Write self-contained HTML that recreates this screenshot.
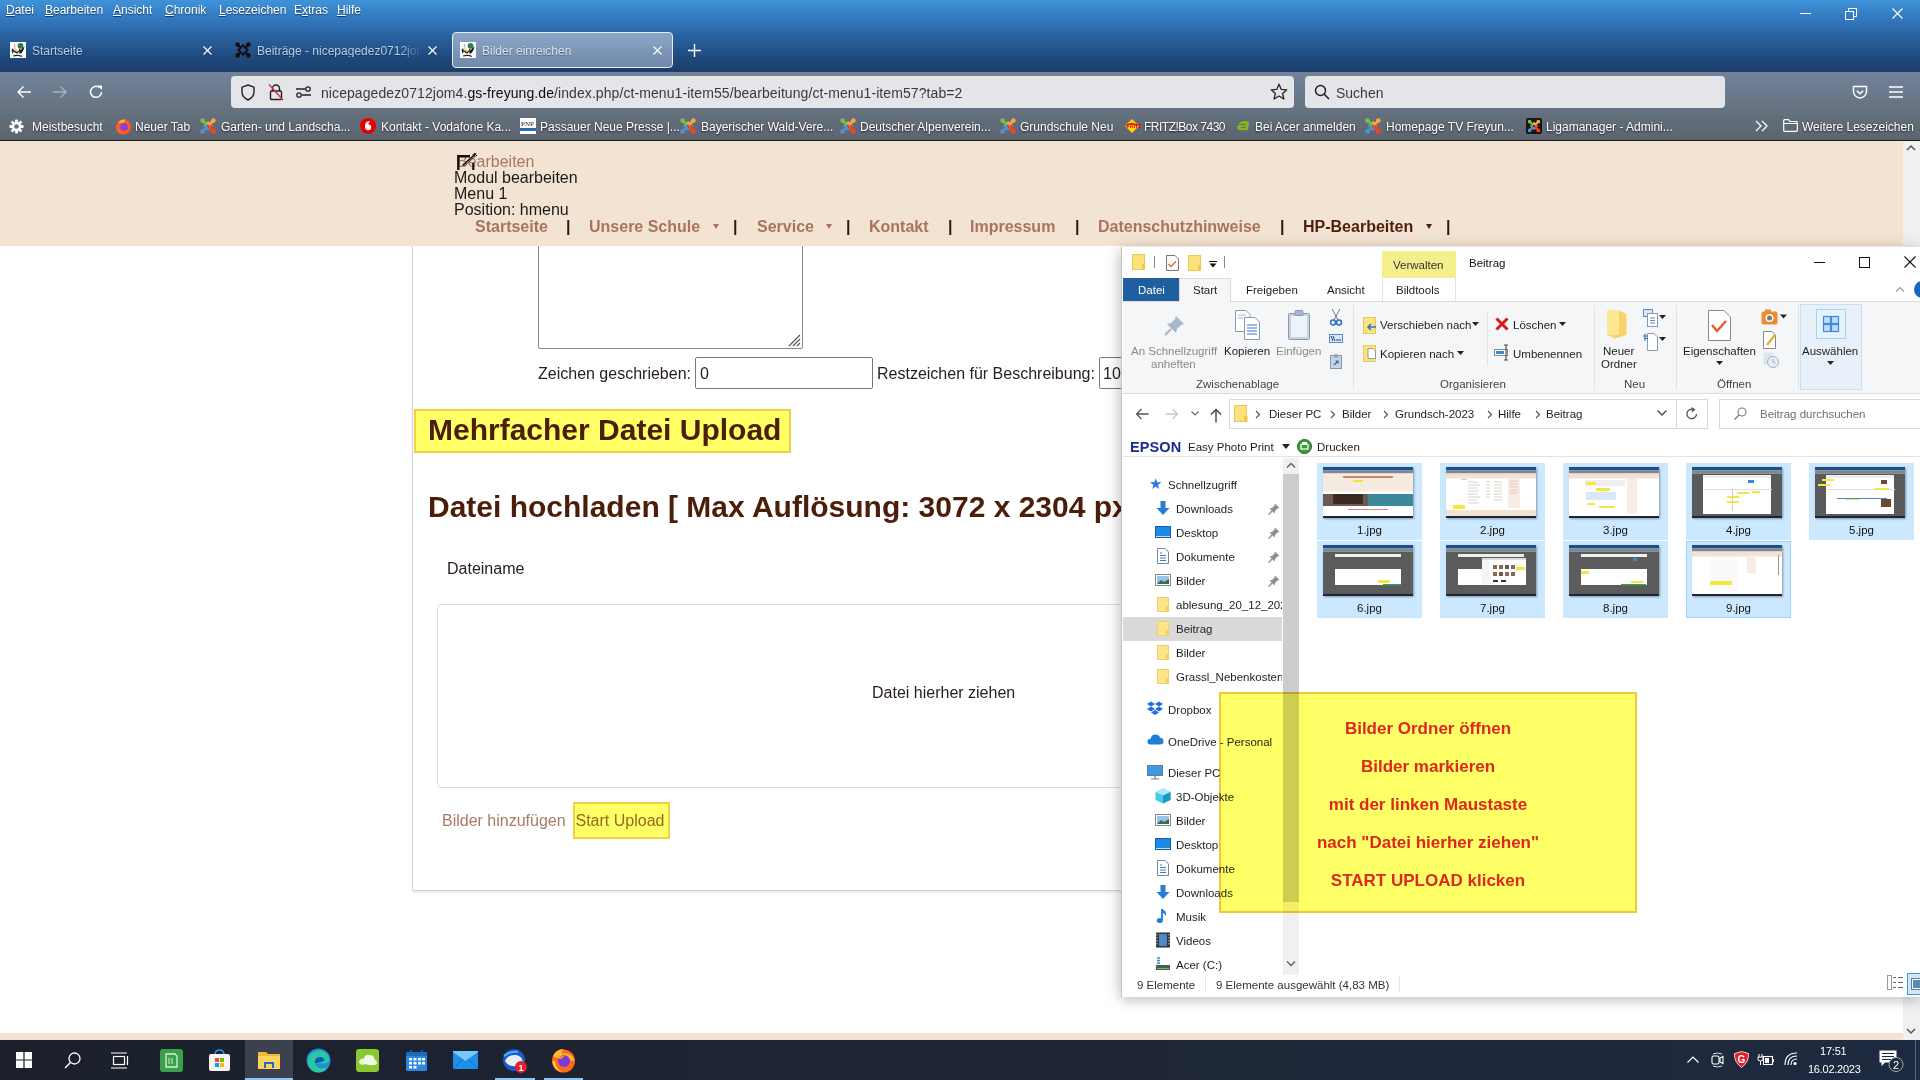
<!DOCTYPE html>
<html><head><meta charset="utf-8">
<style>
*{margin:0;padding:0;box-sizing:border-box}
html,body{width:1920px;height:1080px;overflow:hidden;font-family:"Liberation Sans",sans-serif;background:#fff;position:relative}
.a{position:absolute;white-space:nowrap;line-height:1}
svg.a{overflow:visible}
#chrome{position:absolute;left:0;top:0;width:1920px;height:71px;background:linear-gradient(#3f93d9 0px,#3479c0 18px,#2a62a0 36px,#1f4b80 56px,#1b3f6d 71px)}
#tool{position:absolute;left:0;top:71px;width:1920px;height:69px;background:linear-gradient(#72849c,#65717f 40px,#5c646e)}
.menu{font-size:12px;color:#fff;top:3.5px;text-shadow:0 1px 1px rgba(0,0,0,.5)}
.menu u{text-decoration:underline;text-underline-offset:1px}
.tabt{font-size:12px;color:#b9cbe2;top:45px;text-shadow:0 1px 1px rgba(0,0,0,.35)}
.bm{font-size:12px;color:#fff;top:121px;text-shadow:0 1px 2px rgba(0,0,0,.7)}
.ico{position:absolute}
</style></head><body>
<svg width="0" height="0" style="position:absolute">
<defs>
<symbol id="joomla" viewBox="0 0 16 16">
<g stroke-width="2.6" stroke-linecap="round" fill="none">
<path d="M3 3 L6.2 6.2 M4.6 8 L8 4.6" stroke="#7ac143"/>
<path d="M13 3 L9.8 6.2 M8 4.6 L11.4 8" stroke="#f9a541"/>
<path d="M13 13 L9.8 9.8 M11.4 8 L8 11.4" stroke="#f44321"/>
<path d="M3 13 L6.2 9.8 M8 11.4 L4.6 8" stroke="#5091cd"/>
</g>
<circle cx="2.6" cy="2.6" r="2.3" fill="#7ac143"/><circle cx="13.4" cy="2.6" r="2.3" fill="#f9a541"/>
<circle cx="13.4" cy="13.4" r="2.3" fill="#f44321"/><circle cx="2.6" cy="13.4" r="2.3" fill="#5091cd"/>
</symbol>
<symbol id="joomlab" viewBox="0 0 16 16">
<g stroke-width="2.2" stroke-linecap="round" fill="none" stroke="#111">
<path d="M2.8 2.8 L5.6 5.6 M13.2 2.8 L10.4 5.6 M13.2 13.2 L10.4 10.4 M2.8 13.2 L5.6 10.4"/>
<path d="M8 3.4 L12.6 8 L8 12.6 L3.4 8 Z" stroke-width="2"/>
</g>
<circle cx="2.6" cy="2.6" r="2.3" fill="#111"/><circle cx="13.4" cy="2.6" r="2.3" fill="#111"/>
<circle cx="13.4" cy="13.4" r="2.3" fill="#111"/><circle cx="2.6" cy="13.4" r="2.3" fill="#111"/>
</symbol>
<symbol id="school" viewBox="0 0 16 16">
<rect width="16" height="16" fill="#fff"/>
<circle cx="10.5" cy="3.8" r="2.9" fill="#2f7a55"/>
<path d="M1.5 8 L3 6 L4 9 L2.5 12 Z" fill="#1a2050"/>
<path d="M9 6.5 L11 8 L12.5 6 L14.5 4.5 L13.5 8 L11.5 11 L9.5 12 Z" fill="#181818"/>
<circle cx="5.8" cy="9" r="1.8" fill="#d8c840"/>
<path d="M4 9 L7 11 L9 9 M3 14 Q8 12.5 12 14.5" fill="none" stroke="#222" stroke-width="1.1"/>
<path d="M4.5 2 L5 7" stroke="#999" stroke-width="0.8"/>
</symbol>
</defs>
</svg>

<div id="chrome"></div>
<div id="tool"></div>
<div class="a" style="left:0;top:70px;width:1920px;height:2px;background:linear-gradient(#17355e,#24426a)"></div>
<div class="a" style="left:0;top:140px;width:1920px;height:1px;background:#1c1c1c"></div>
<!-- menu -->
<div class="a menu" style="left:6px"><u>D</u>atei</div>
<div class="a menu" style="left:45px"><u>B</u>earbeiten</div>
<div class="a menu" style="left:113px"><u>A</u>nsicht</div>
<div class="a menu" style="left:165px"><u>C</u>hronik</div>
<div class="a menu" style="left:219px"><u>L</u>esezeichen</div>
<div class="a menu" style="left:294px">E<u>x</u>tras</div>
<div class="a menu" style="left:337px"><u>H</u>ilfe</div>
<!-- window controls -->
<div class="a" style="left:1800px;top:13px;width:11px;height:1px;background:#fff"></div>
<svg class="a" style="left:1845px;top:8px" width="12" height="12" viewBox="0 0 12 12"><rect x="0.5" y="3.5" width="8" height="8" fill="none" stroke="#fff"/><path d="M3.5 3.5 V0.5 H11.5 V8.5 H8.5" fill="none" stroke="#fff"/></svg>
<svg class="a" style="left:1892px;top:8px" width="11" height="11" viewBox="0 0 11 11"><path d="M0.5 0.5 L10.5 10.5 M10.5 0.5 L0.5 10.5" stroke="#fff" stroke-width="1.1"/></svg>
<!-- tabs -->
<div class="a" style="left:452px;top:32px;width:221px;height:36px;border:1px solid #e4ecf6;border-radius:4px;background:linear-gradient(#8aa6c8,#7189ab)"></div>
<svg class="a" style="left:10px;top:42px" width="16" height="16"><use href="#school"/></svg>
<div class="a tabt" style="left:32px">Startseite</div>
<svg class="a" style="left:203px;top:46px" width="9" height="9" viewBox="0 0 9 9"><path d="M0.5 0.5 L8.5 8.5 M8.5 0.5 L0.5 8.5" stroke="#fff" stroke-width="1.1"/></svg>
<svg class="a" style="left:235px;top:42px" width="16" height="16"><use href="#joomlab"/></svg>
<div class="a tabt" style="left:257px;width:166px;overflow:hidden;-webkit-mask-image:linear-gradient(90deg,#000 85%,transparent)">Beiträge - nicepagedez0712jom4</div>
<svg class="a" style="left:428px;top:46px" width="9" height="9" viewBox="0 0 9 9"><path d="M0.5 0.5 L8.5 8.5 M8.5 0.5 L0.5 8.5" stroke="#fff" stroke-width="1.1"/></svg>
<svg class="a" style="left:460px;top:42px" width="16" height="16"><use href="#school"/></svg>
<div class="a tabt" style="left:482px;color:#d6e0ec">Bilder einreichen</div>
<svg class="a" style="left:653px;top:46px" width="9" height="9" viewBox="0 0 9 9"><path d="M0.5 0.5 L8.5 8.5 M8.5 0.5 L0.5 8.5" stroke="#fff" stroke-width="1.1"/></svg>
<svg class="a" style="left:688px;top:44px" width="13" height="13" viewBox="0 0 13 13"><path d="M6.5 0 V13 M0 6.5 H13" stroke="#fff" stroke-width="1.4"/></svg>
<!-- nav buttons -->
<svg class="a" style="left:16px;top:85px" width="16" height="14" viewBox="0 0 16 14"><path d="M15 7 H2 M7.5 1.5 L2 7 L7.5 12.5" fill="none" stroke="#fff" stroke-width="1.4"/></svg>
<svg class="a" style="left:52px;top:85px" width="16" height="14" viewBox="0 0 16 14"><path d="M1 7 H14 M8.5 1.5 L14 7 L8.5 12.5" fill="none" stroke="#a9b3bf" stroke-width="1.4"/></svg>
<svg class="a" style="left:88px;top:84px" width="16" height="16" viewBox="0 0 16 16"><path d="M13.5 8 A5.5 5.5 0 1 1 11.5 3.6" fill="none" stroke="#fff" stroke-width="1.5"/><path d="M9.5 1.5 L14 1.5 L14 6 Z" fill="#fff"/></svg>
<!-- url bar -->
<div class="a" style="left:231px;top:76px;width:1063px;height:32px;background:#e3e5e9;border-radius:4px"></div>
<svg class="a" style="left:240px;top:84px" width="16" height="17" viewBox="0 0 16 17"><path d="M8 1 L14 3.2 V8 Q14 13 8 16 Q2 13 2 8 V3.2 Z" fill="none" stroke="#222" stroke-width="1.4"/></svg>
<svg class="a" style="left:268px;top:83px" width="16" height="18" viewBox="0 0 16 18"><path d="M4.5 8 V5.5 A3.5 3.5 0 0 1 11.5 5.5 V8" fill="none" stroke="#222" stroke-width="1.4"/><rect x="2.5" y="8" width="11" height="8.5" rx="1" fill="none" stroke="#222" stroke-width="1.4"/><path d="M1 1.5 L15 17" stroke="#e22850" stroke-width="1.4"/></svg>
<svg class="a" style="left:295px;top:85px" width="17" height="14" viewBox="0 0 17 14"><path d="M1 4 H10 M7 10 H16" stroke="#222" stroke-width="1.4"/><circle cx="13" cy="4" r="2.2" fill="none" stroke="#222" stroke-width="1.3"/><circle cx="4" cy="10" r="2.2" fill="none" stroke="#222" stroke-width="1.3"/></svg>
<div class="a" style="left:321px;top:86px;font-size:14px;color:#3a3a3a;letter-spacing:0.08px">nicepagedez0712jom4.<span style="color:#0c0c0c">gs-freyung.de</span>/index.php/ct-menu1-item55/bearbeitung/ct-menu1-item57?tab=2</div>
<svg class="a" style="left:1270px;top:83px" width="18" height="18" viewBox="0 0 18 18"><path d="M9 1.2 L11.3 6.4 L16.8 6.8 L12.6 10.4 L13.9 16 L9 13 L4.1 16 L5.4 10.4 L1.2 6.8 L6.7 6.4 Z" fill="none" stroke="#222" stroke-width="1.3" stroke-linejoin="round"/></svg>
<div class="a" style="left:1305px;top:76px;width:420px;height:32px;background:#e3e5e9;border-radius:4px"></div>
<svg class="a" style="left:1314px;top:84px" width="16" height="16" viewBox="0 0 16 16"><circle cx="6.5" cy="6.5" r="5" fill="none" stroke="#222" stroke-width="1.5"/><path d="M10 10 L15 15" stroke="#222" stroke-width="1.6"/></svg>
<div class="a" style="left:1336px;top:86px;font-size:14px;color:#3c3c3c">Suchen</div>
<svg class="a" style="left:1852px;top:85px" width="16" height="15" viewBox="0 0 16 15"><path d="M1.5 1.5 H14.5 V6.5 A6.5 6.5 0 0 1 1.5 6.5 Z" fill="none" stroke="#fff" stroke-width="1.4" stroke-linejoin="round"/><path d="M4.8 5.8 L8 8.8 L11.2 5.8" fill="none" stroke="#fff" stroke-width="1.5"/></svg>
<svg class="a" style="left:1889px;top:86px" width="14" height="12" viewBox="0 0 14 12"><path d="M0 1 H14 M0 6 H14 M0 11 H14" stroke="#fff" stroke-width="1.3"/></svg>
<!-- bookmarks -->
<svg class="a" style="left:9px;top:119px" width="15" height="15" viewBox="0 0 16 16"><g fill="#fff"><circle cx="8" cy="8" r="5"/><rect x="6.5" y="0.5" width="3" height="15" rx="0.5"/><rect x="0.5" y="6.5" width="15" height="3" rx="0.5"/><rect x="6.5" y="0.5" width="3" height="15" rx="0.5" transform="rotate(45 8 8)"/><rect x="6.5" y="0.5" width="3" height="15" rx="0.5" transform="rotate(-45 8 8)"/></g><circle cx="8" cy="8" r="2.5" fill="#66717e"/></svg>
<div class="a bm" style="left:32px">Meistbesucht</div>
<svg class="a" style="left:115px;top:118px" width="17" height="17" viewBox="0 0 16 16"><circle cx="8" cy="8.5" r="7" fill="#ff5a2a"/><path d="M3 5 Q5 0.5 10 1.5 Q8 2.5 9 4" fill="#ffb22a"/><circle cx="8.5" cy="8.5" r="3.6" fill="#8b3fd6"/><path d="M1.2 9 Q2 13.5 7 15 Q3 14 1.2 9" fill="#ffcd3a"/></svg>
<div class="a bm" style="left:135px">Neuer Tab</div>
<svg class="a" style="left:200px;top:118px" width="16" height="16"><use href="#joomla"/></svg>
<div class="a bm" style="left:221px">Garten- und Landscha...</div>
<svg class="a" style="left:360px;top:118px" width="16" height="16" viewBox="0 0 16 16"><circle cx="8" cy="8" r="8" fill="#e60000"/><path d="M8.6 3.2 Q5 3.6 5 8.4 Q5 12.2 8.3 12.2 Q11.2 12.2 11.2 9.2 Q11.2 6.7 8.4 6.4 Q8 4.6 10.2 3.5 Q9.4 3.1 8.6 3.2" fill="#fff"/></svg>
<div class="a bm" style="left:381px">Kontakt - Vodafone Ka...</div>
<svg class="a" style="left:520px;top:118px" width="16" height="16" viewBox="0 0 16 16"><rect width="16" height="16" fill="#fff"/><text x="1" y="8" font-size="7" font-family="Liberation Serif" fill="#222">PNP</text><rect x="0" y="10" width="16" height="3" fill="#2a6ab0"/></svg>
<div class="a bm" style="left:540px">Passauer Neue Presse |...</div>
<svg class="a" style="left:680px;top:118px" width="16" height="16"><use href="#joomla"/></svg>
<div class="a bm" style="left:701px">Bayerischer Wald-Vere...</div>
<svg class="a" style="left:840px;top:118px" width="16" height="16"><use href="#joomla"/></svg>
<div class="a bm" style="left:860px">Deutscher Alpenverein...</div>
<svg class="a" style="left:1000px;top:118px" width="16" height="16"><use href="#joomla"/></svg>
<div class="a bm" style="left:1020px">Grundschule Neu</div>
<svg class="a" style="left:1124px;top:118px" width="16" height="16" viewBox="0 0 16 16"><path d="M8 1 L15 8 L8 15 L1 8 Z" fill="#ffd200"/><path d="M2.5 8 Q8 3 13.5 8" fill="none" stroke="#e2001a" stroke-width="1.5"/><text x="3" y="10" font-size="5" font-weight="bold" fill="#e2001a" font-family="Liberation Sans">FRITZ</text></svg>
<div class="a bm" style="left:1144px;letter-spacing:-0.5px">FRITZ!Box 7430</div>
<svg class="a" style="left:1235px;top:118px" width="16" height="16" viewBox="0 0 16 16"><path d="M3 6 Q8 1 14 4 L13 12 L9 12 Q2 13 2 9 Q2 7 6 7 L11 7 Q10 5 5 6.5 Z M6 9 Q5 10.5 10 10 L10.5 8.5 Z" fill="#83b81a" fill-rule="evenodd"/></svg>
<div class="a bm" style="left:1255px">Bei Acer anmelden</div>
<svg class="a" style="left:1365px;top:118px" width="16" height="16"><use href="#joomla"/></svg>
<div class="a bm" style="left:1386px">Homepage TV Freyun...</div>
<svg class="a" style="left:1526px;top:118px" width="16" height="16" viewBox="0 0 16 16"><rect width="16" height="16" rx="2" fill="#161616"/><use href="#joomla" x="1.5" y="1.5" width="13" height="13"/></svg>
<div class="a bm" style="left:1546px">Ligamanager - Admini...</div>
<svg class="a" style="left:1755px;top:120px" width="14" height="12" viewBox="0 0 14 12"><path d="M1 1 L6 6 L1 11 M7 1 L12 6 L7 11" fill="none" stroke="#fff" stroke-width="1.3"/></svg>
<svg class="a" style="left:1783px;top:119px" width="15" height="13" viewBox="0 0 15 13"><path d="M0.7 1.5 Q0.7 0.7 1.5 0.7 H5.5 L7 2.5 H13.5 Q14.3 2.5 14.3 3.3 V11.5 Q14.3 12.3 13.5 12.3 H1.5 Q0.7 12.3 0.7 11.5 Z M0.7 4.5 H14.3" fill="none" stroke="#fff" stroke-width="1.2"/></svg>
<div class="a bm" style="left:1802px">Weitere Lesezeichen</div>
<!-- ============ PAGE ============ -->
<div class="a" style="left:0;top:141px;width:1903px;height:105px;background:#f3e3d3"></div>
<div class="a" style="left:1903px;top:141px;width:17px;height:899px;background:#f0f0f0"></div>
<svg class="a" style="left:1906px;top:144px" width="10" height="7" viewBox="0 0 10 7"><path d="M1 6 L5 2 L9 6" fill="none" stroke="#555" stroke-width="1.5"/></svg>
<svg class="a" style="left:1906px;top:1028px" width="10" height="7" viewBox="0 0 10 7"><path d="M1 1 L5 5 L9 1" fill="none" stroke="#555" stroke-width="1.5"/></svg>
<div class="a" style="left:0;top:1033px;width:1903px;height:7px;background:#f3e3d3"></div>
<style>
.pt{font-size:16px;color:#1a1a1a}
.nv{font-size:16px;font-weight:bold;color:#a8745a}
.sp{font-size:16px;font-weight:bold;color:#3a1608}
.tri{font-size:9px;color:#a9704f}
</style>
<div class="a pt" style="left:457px;top:154px;color:#a87a62">Bearbeiten</div>
<svg class="a" style="left:456px;top:152px" width="22" height="19" viewBox="0 0 22 19"><path d="M2.3 18 V4.3 H14" fill="none" stroke="#111" stroke-width="2.4"/><path d="M17.3 18 V11" fill="none" stroke="#111" stroke-width="2.2"/><path d="M6.5 13.5 L20 1.5" stroke="#111" stroke-width="1.6"/><path d="M8 14.5 L19 4.5" stroke="#333" stroke-width="0.8"/><path d="M16.5 2 L19.5 5 M18 1 L21 4" stroke="#111" stroke-width="1"/></svg>
<div class="a pt" style="left:454px;top:170px">Modul bearbeiten</div>
<div class="a pt" style="left:454px;top:186px">Menu 1</div>
<div class="a pt" style="left:454px;top:202px">Position: hmenu</div>
<div class="a nv" style="left:475px;top:219px">Startseite</div>
<div class="a sp" style="left:566px;top:219px">|</div>
<div class="a nv" style="left:589px;top:219px">Unsere Schule</div>
<svg class="a" style="left:712px;top:223px" width="8" height="7" viewBox="0 0 8 7"><path d="M1 1 H7 L4 6 Z" fill="#a8745a"/></svg>
<div class="a sp" style="left:733px;top:219px">|</div>
<div class="a nv" style="left:757px;top:219px">Service</div>
<svg class="a" style="left:825px;top:223px" width="8" height="7" viewBox="0 0 8 7"><path d="M1 1 H7 L4 6 Z" fill="#a8745a"/></svg>
<div class="a sp" style="left:846px;top:219px">|</div>
<div class="a nv" style="left:869px;top:219px">Kontakt</div>
<div class="a sp" style="left:948px;top:219px">|</div>
<div class="a nv" style="left:970px;top:219px">Impressum</div>
<div class="a sp" style="left:1075px;top:219px">|</div>
<div class="a nv" style="left:1098px;top:219px">Datenschutzhinweise</div>
<div class="a sp" style="left:1280px;top:219px">|</div>
<div class="a nv" style="left:1303px;top:219px;color:#4d1e0c">HP-Bearbeiten</div>
<svg class="a" style="left:1425px;top:223px" width="8" height="7" viewBox="0 0 8 7"><path d="M1 1 H7 L4 6 Z" fill="#4d1e0c"/></svg>
<div class="a sp" style="left:1446px;top:219px">|</div>

<!-- content card -->
<div class="a" style="left:412px;top:245px;width:760px;height:646px;border-left:1px solid #d6d6d6;border-bottom:1px solid #d0d0d0;box-shadow:0 2px 2px rgba(0,0,0,.08)"></div>
<div class="a" style="left:538px;top:236px;width:265px;height:113px;border:1px solid #8a8a8a;border-radius:2px;background:#fff"></div>
<div class="a" style="left:412px;top:236px;width:710px;height:10px;background:#f3e3d3"></div>
<svg class="a" style="left:785px;top:331px" width="16" height="16" viewBox="0 0 16 16"><path d="M15 4 L4 15 M15 8 L8 15 M15 12 L12 15" stroke="#555" stroke-width="1.2"/></svg>
<div class="a pt" style="left:538px;top:366px;color:#2a2020">Zeichen geschrieben:</div>
<div class="a" style="left:695px;top:357px;width:178px;height:32px;border:1px solid #777;border-radius:2px"></div>
<div class="a pt" style="left:700px;top:366px;color:#2a2020">0</div>
<div class="a pt" style="left:877px;top:366px;color:#2a2020">Restzeichen für Beschreibung:</div>
<div class="a" style="left:1099px;top:357px;width:60px;height:32px;border:1px solid #777;border-radius:2px"></div>
<div class="a pt" style="left:1103px;top:366px;color:#2a2020">10</div>
<div class="a" style="left:414px;top:409px;width:377px;height:44px;background:#ffff66;border:2px solid #f0d146"></div>
<div class="a" style="left:428px;top:415px;font-size:30px;font-weight:bold;color:#4b1d0a">Mehrfacher Datei Upload</div>
<div class="a" style="left:428px;top:492px;font-size:30px;font-weight:bold;color:#4b1d0a">Datei hochladen [ Max Auflösung: 3072 x 2304 px</div>
<div class="a pt" style="left:447px;top:561px;color:#2a2020">Dateiname</div>
<div class="a" style="left:437px;top:604px;width:740px;height:184px;border:1px solid #dedede;border-radius:4px"></div>
<div class="a pt" style="left:872px;top:685px;color:#2a2020">Datei hierher ziehen</div>
<div class="a pt" style="left:442px;top:813px;color:#a97a66">Bilder hinzufügen</div>
<div class="a" style="left:573px;top:802px;width:97px;height:37px;background:#ffff66;border:2px solid #f0d146"></div>
<div class="a pt" style="left:575.5px;top:813px;color:#94691f">Start Upload</div>
<!-- ============ EXPLORER ============ -->
<style>
.ex{font-size:11.5px;color:#1e1e1e}
.exg{font-size:11.5px;color:#8a8a8a}
</style>
<div class="a" style="left:1121px;top:247px;width:799px;height:750px;background:#fff;box-shadow:-2px 1px 16px rgba(0,0,0,.16),0 4px 10px rgba(0,0,0,.12);border-left:1px solid #c4c4c4"></div>
<!-- QAT -->
<svg class="a" style="left:1132px;top:254px" width="14" height="16" viewBox="0 0 14 16"><rect x="0.5" y="0.5" width="12" height="15" fill="#fde27a" stroke="#e8c860"/><rect x="10" y="10" width="3" height="5.5" fill="#f0c850"/></svg>
<div class="a" style="left:1154px;top:256px;width:1px;height:12px;background:#888"></div>
<svg class="a" style="left:1166px;top:255px" width="13" height="16" viewBox="0 0 13 16"><path d="M0.5 0.5 H9 L12.5 4 V15.5 H0.5 Z" fill="#fafafa" stroke="#777"/><path d="M2.5 9 L5 11.5 L10 6.5" fill="none" stroke="#e06a3a" stroke-width="1.4"/></svg>
<svg class="a" style="left:1188px;top:255px" width="14" height="16" viewBox="0 0 14 16"><rect x="0.5" y="0.5" width="12" height="15" fill="#fde27a" stroke="#e8c860"/><rect x="10" y="10" width="3" height="5.5" fill="#f0c850"/></svg>
<svg class="a" style="left:1209px;top:261px" width="8" height="7" viewBox="0 0 8 7"><path d="M0 0.5 H8" stroke="#111"/><path d="M0.5 2.5 H7.5 L4 6.5 Z" fill="#111"/></svg>
<div class="a" style="left:1224px;top:256px;width:1px;height:12px;background:#888"></div>
<div class="a" style="left:1382px;top:251px;width:74px;height:27px;background:#f2ef8c"></div>
<div class="a ex" style="left:1393px;top:260px;color:#333">Verwalten</div>
<div class="a ex" style="left:1469px;top:258px;color:#111">Beitrag</div>
<div class="a" style="left:1814px;top:262px;width:11px;height:1px;background:#111"></div>
<div class="a" style="left:1859px;top:257px;width:11px;height:11px;border:1px solid #111"></div>
<svg class="a" style="left:1904px;top:256px" width="12" height="12" viewBox="0 0 12 12"><path d="M0.5 0.5 L11.5 11.5 M11.5 0.5 L0.5 11.5" stroke="#111" stroke-width="1.1"/></svg>
<!-- ribbon tabs -->
<div class="a" style="left:1123px;top:301px;width:797px;height:93px;background:#f5f6f7;border-top:1px solid #dadbdc;border-bottom:1px solid #dadbdc"></div>
<div class="a" style="left:1123px;top:278px;width:56px;height:23px;background:#1f5f9f"></div>
<div class="a ex" style="left:1138px;top:285px;color:#fff">Datei</div>
<div class="a" style="left:1179px;top:278px;width:52px;height:24px;background:#f5f6f7;border:1px solid #dadbdc;border-bottom:none"></div>
<div class="a ex" style="left:1193px;top:285px">Start</div>
<div class="a ex" style="left:1246px;top:285px">Freigeben</div>
<div class="a ex" style="left:1327px;top:285px">Ansicht</div>
<div class="a" style="left:1382px;top:278px;width:1px;height:23px;background:#e2e2e2"></div>
<div class="a" style="left:1455px;top:278px;width:1px;height:23px;background:#e2e2e2"></div>
<div class="a ex" style="left:1396px;top:285px">Bildtools</div>
<svg class="a" style="left:1895px;top:286px" width="10" height="6" viewBox="0 0 10 6"><path d="M1 5.5 L5 1.5 L9 5.5" fill="none" stroke="#999" stroke-width="1.2"/></svg>
<div class="a" style="left:1914px;top:281px;width:17px;height:17px;border-radius:50%;background:#1766c2"></div>
<!-- ribbon content -->
<svg class="a" style="left:1164px;top:314px" width="22" height="22" viewBox="0 0 22 22"><path d="M12 2 L20 10 L17 11 L13 15 L12 19 L3 10 L7 9 L11 5 Z" fill="#a7b8cc"/><path d="M7 15 L1 21" stroke="#a7b8cc" stroke-width="2.2"/></svg>
<div class="a exg" style="left:1131px;top:346px">An Schnellzugriff</div>
<div class="a exg" style="left:1151px;top:359px">anheften</div>
<svg class="a" style="left:1235px;top:310px" width="25" height="30" viewBox="0 0 25 30"><path d="M0.5 0.5 H11 L15 4.5 V21.5 H0.5 Z" fill="#fff" stroke="#8b9ab0"/><path d="M9.5 7.5 H20 L24.5 12 V29.5 H9.5 Z" fill="#fff" stroke="#8b9ab0"/><path d="M12 15 H22 M12 18 H22 M12 21 H22 M12 24 H22" stroke="#3a78c8" stroke-width="1"/><path d="M3 5 H11 M3 8 H8" stroke="#9fb8d8" stroke-width="1"/></svg>
<div class="a ex" style="left:1224px;top:346px">Kopieren</div>
<svg class="a" style="left:1288px;top:310px" width="22" height="30" viewBox="0 0 22 30"><rect x="0.5" y="3.5" width="21" height="26" rx="1" fill="#c5d3e3" stroke="#8b9ab0"/><rect x="3" y="6" width="16" height="21" fill="#eef3f9"/><rect x="7" y="0.5" width="8" height="5" rx="1" fill="#a8b8cc" stroke="#8b9ab0"/></svg>
<div class="a exg" style="left:1276px;top:346px">Einfügen</div>
<svg class="a" style="left:1330px;top:309px" width="12" height="17" viewBox="0 0 12 17"><path d="M2 0 L8 11 M10 0 L4 11" stroke="#777" stroke-width="1"/><circle cx="3" cy="13.5" r="2.5" fill="none" stroke="#2a70c0" stroke-width="1.5"/><circle cx="9" cy="13.5" r="2.5" fill="none" stroke="#2a70c0" stroke-width="1.5"/></svg>
<svg class="a" style="left:1329px;top:334px" width="14" height="9" viewBox="0 0 14 9"><rect x="0.5" y="0.5" width="13" height="8" fill="#dbe8f6" stroke="#5a8ac8"/><path d="M2 2 L4 7 M4 2 L6 7 M7 6 H12" stroke="#1a4a8a" stroke-width="1"/></svg>
<svg class="a" style="left:1330px;top:354px" width="12" height="15" viewBox="0 0 12 15"><rect x="0.5" y="1.5" width="11" height="13" fill="#c5d3e3" stroke="#8b9ab0"/><rect x="4" y="0.5" width="4" height="3" fill="#8b9ab0"/><path d="M4 11 L8 7 M5.5 7 H8 V9.5" fill="none" stroke="#2a6ab0" stroke-width="1.1"/></svg>
<div class="a ex" style="left:1196px;top:379px;color:#444">Zwischenablage</div>
<div class="a" style="left:1353px;top:305px;width:1px;height:85px;background:#e2e3e4"></div>
<svg class="a" style="left:1363px;top:317px" width="14" height="17" viewBox="0 0 14 17"><rect x="0.5" y="0.5" width="12" height="16" fill="#fde27a" stroke="#e8c860"/><path d="M13 10 H5 M8 7 L5 10 L8 13" fill="none" stroke="#2a78d0" stroke-width="1.6"/></svg>
<div class="a ex" style="left:1380px;top:320px">Verschieben nach</div>
<svg class="a" style="left:1472px;top:322px" width="7" height="4" viewBox="0 0 7 4"><path d="M0 0 H7 L3.5 4 Z" fill="#222"/></svg>
<svg class="a" style="left:1363px;top:345px" width="14" height="17" viewBox="0 0 14 17"><rect x="0.5" y="0.5" width="12" height="16" fill="#fde27a" stroke="#e8c860"/><path d="M5 3.5 H10 L12.5 6 V13.5 H5 Z" fill="#fff" stroke="#8b9ab0"/></svg>
<div class="a ex" style="left:1380px;top:349px">Kopieren nach</div>
<svg class="a" style="left:1457px;top:351px" width="7" height="4" viewBox="0 0 7 4"><path d="M0 0 H7 L3.5 4 Z" fill="#222"/></svg>
<div class="a" style="left:1487px;top:312px;width:1px;height:54px;background:#e2e3e4"></div>
<svg class="a" style="left:1495px;top:317px" width="14" height="14" viewBox="0 0 14 14"><path d="M1.5 1.5 L12.5 12.5 M12.5 1.5 L1.5 12.5" stroke="#d81a1a" stroke-width="3"/></svg>
<div class="a ex" style="left:1513px;top:320px">Löschen</div>
<svg class="a" style="left:1559px;top:322px" width="7" height="4" viewBox="0 0 7 4"><path d="M0 0 H7 L3.5 4 Z" fill="#222"/></svg>
<svg class="a" style="left:1494px;top:344px" width="17" height="17" viewBox="0 0 17 17"><rect x="0.5" y="5.5" width="13" height="6" fill="#fff" stroke="#888"/><rect x="2" y="7" width="8" height="3" fill="#3a88d8"/><path d="M10 1 H14 M12 1 V16 M10 16 H14" stroke="#444" stroke-width="1.1"/></svg>
<div class="a ex" style="left:1513px;top:349px">Umbenennen</div>
<div class="a ex" style="left:1440px;top:379px;color:#444">Organisieren</div>
<div class="a" style="left:1594px;top:305px;width:1px;height:85px;background:#e2e3e4"></div>
<svg class="a" style="left:1607px;top:310px" width="20" height="29" viewBox="0 0 20 29"><path d="M0.5 0.5 H12 L19.5 4 V25 L8 28.5 L0.5 25 Z" fill="#f7d46a"/><path d="M0.5 0.5 H12 V25 L0.5 25 Z" fill="#fde793"/></svg>
<div class="a ex" style="left:1603px;top:346px">Neuer</div>
<div class="a ex" style="left:1601px;top:359px">Ordner</div>
<svg class="a" style="left:1643px;top:309px" width="23" height="20" viewBox="0 0 23 20"><rect x="0.5" y="0.5" width="9" height="7" fill="#dbe8f6" stroke="#5a8ac8"/><rect x="4.5" y="4.5" width="10" height="13" fill="#fff" stroke="#8b9ab0"/><path d="M7 9 H12 M7 11.5 H12 M7 14 H12" stroke="#5a8ac8"/><path d="M16 6 H23 L19.5 10 Z" fill="#222"/></svg>
<svg class="a" style="left:1643px;top:331px" width="23" height="20" viewBox="0 0 23 20"><path d="M4.5 2.5 H11 L14.5 6 V19.5 H4.5 Z" fill="#fff" stroke="#8b9ab0"/><path d="M0 5 H5 M1 7.5 H5 M2 2.5 V10" stroke="#2a70c0"/><path d="M16 6 H23 L19.5 10 Z" fill="#222"/></svg>
<div class="a ex" style="left:1624px;top:379px;color:#444">Neu</div>
<div class="a" style="left:1676px;top:305px;width:1px;height:85px;background:#e2e3e4"></div>
<svg class="a" style="left:1708px;top:310px" width="23" height="31" viewBox="0 0 23 31"><path d="M0.5 0.5 H16 L22.5 7 V30.5 H0.5 Z" fill="#fff" stroke="#888"/><path d="M4 15 L9 21 L18 11" fill="none" stroke="#e8582a" stroke-width="2.4"/></svg>
<div class="a ex" style="left:1683px;top:346px">Eigenschaften</div>
<svg class="a" style="left:1716px;top:361px" width="7" height="4" viewBox="0 0 7 4"><path d="M0 0 H7 L3.5 4 Z" fill="#222"/></svg>
<svg class="a" style="left:1761px;top:309px" width="26" height="16" viewBox="0 0 26 16"><rect x="0.5" y="2.5" width="16" height="13" rx="2" fill="#f08a2a"/><rect x="4" y="0.5" width="6" height="3" fill="#f08a2a"/><circle cx="8.5" cy="9" r="4" fill="#fff"/><circle cx="8.5" cy="9" r="2.5" fill="#777"/><path d="M19 5.5 H26 L22.5 9.5 Z" fill="#222"/></svg>
<svg class="a" style="left:1763px;top:331px" width="14" height="18" viewBox="0 0 14 18"><path d="M0.5 0.5 H9 L12.5 4 V17.5 H0.5 Z" fill="#fff" stroke="#888"/><path d="M4 14 L12 4" stroke="#e8b030" stroke-width="2.4"/></svg>
<svg class="a" style="left:1763px;top:352px" width="17" height="16" viewBox="0 0 17 16"><rect x="0.5" y="0.5" width="10" height="12" fill="#dde6ef"/><circle cx="10" cy="10" r="5.5" fill="#e8eef5" stroke="#9fb0c5"/><path d="M10 7 V10 L12.5 11" stroke="#9fb0c5" fill="none"/></svg>
<div class="a ex" style="left:1717px;top:379px;color:#444">Öffnen</div>
<div class="a" style="left:1798px;top:305px;width:1px;height:85px;background:#e2e3e4"></div>
<div class="a" style="left:1800px;top:304px;width:62px;height:86px;background:#e8f1fa;border:1px solid #c6dff5"></div>
<svg class="a" style="left:1816px;top:309px" width="30" height="30" viewBox="0 0 30 30"><rect x="0.5" y="0.5" width="29" height="29" fill="#e8f2fb" stroke="#a8d0f0"/><rect x="7.5" y="7.5" width="7" height="7" fill="#c2dcf6" stroke="#3a8ee2" stroke-width="1.2"/><rect x="15.5" y="7.5" width="7" height="7" fill="#c2dcf6" stroke="#3a8ee2" stroke-width="1.2"/><rect x="7.5" y="15.5" width="7" height="7" fill="#c2dcf6" stroke="#3a8ee2" stroke-width="1.2"/><rect x="15.5" y="15.5" width="7" height="7" fill="#c2dcf6" stroke="#3a8ee2" stroke-width="1.2"/></svg>
<div class="a ex" style="left:1802px;top:346px">Auswählen</div>
<svg class="a" style="left:1827px;top:361px" width="7" height="4" viewBox="0 0 7 4"><path d="M0 0 H7 L3.5 4 Z" fill="#222"/></svg>

<!-- address row -->
<svg class="a" style="left:1135px;top:408px" width="14" height="12" viewBox="0 0 14 12"><path d="M13.5 6 H1.5 M6.5 1 L1.5 6 L6.5 11" fill="none" stroke="#555" stroke-width="1.3"/></svg>
<svg class="a" style="left:1165px;top:408px" width="14" height="12" viewBox="0 0 14 12"><path d="M0.5 6 H12.5 M7.5 1 L12.5 6 L7.5 11" fill="none" stroke="#c8c8c8" stroke-width="1.3"/></svg>
<svg class="a" style="left:1191px;top:411px" width="8" height="5" viewBox="0 0 8 5"><path d="M0.5 0.5 L4 4 L7.5 0.5" fill="none" stroke="#666" stroke-width="1.1"/></svg>
<svg class="a" style="left:1210px;top:408px" width="12" height="15" viewBox="0 0 12 15"><path d="M6 14.5 V1.5 M1 6.5 L6 1.5 L11 6.5" fill="none" stroke="#444" stroke-width="1.4"/></svg>
<div class="a" style="left:1229px;top:399px;width:479px;height:30px;border:1px solid #d9d9d9"></div>
<div class="a" style="left:1676px;top:399px;width:1px;height:30px;background:#d9d9d9"></div>
<svg class="a" style="left:1234px;top:405px" width="14" height="17" viewBox="0 0 14 17"><rect x="0.5" y="0.5" width="12" height="16" fill="#fde27a" stroke="#e8c860"/><rect x="10" y="11" width="3.5" height="6" fill="#f0c850"/></svg>
<svg class="a" style="left:1255px;top:410px" width="6" height="9" viewBox="0 0 6 9"><path d="M1 1 L4.5 4.5 L1 8" fill="none" stroke="#555" stroke-width="1.2"/></svg>
<div class="a ex" style="left:1269px;top:409px">Dieser PC</div>
<svg class="a" style="left:1330px;top:410px" width="6" height="9" viewBox="0 0 6 9"><path d="M1 1 L4.5 4.5 L1 8" fill="none" stroke="#555" stroke-width="1.2"/></svg>
<div class="a ex" style="left:1342px;top:409px">Bilder</div>
<svg class="a" style="left:1383px;top:410px" width="6" height="9" viewBox="0 0 6 9"><path d="M1 1 L4.5 4.5 L1 8" fill="none" stroke="#555" stroke-width="1.2"/></svg>
<div class="a ex" style="left:1395px;top:409px">Grundsch-2023</div>
<svg class="a" style="left:1487px;top:410px" width="6" height="9" viewBox="0 0 6 9"><path d="M1 1 L4.5 4.5 L1 8" fill="none" stroke="#555" stroke-width="1.2"/></svg>
<div class="a ex" style="left:1498px;top:409px">Hilfe</div>
<svg class="a" style="left:1535px;top:410px" width="6" height="9" viewBox="0 0 6 9"><path d="M1 1 L4.5 4.5 L1 8" fill="none" stroke="#555" stroke-width="1.2"/></svg>
<div class="a ex" style="left:1546px;top:409px">Beitrag</div>
<svg class="a" style="left:1657px;top:410px" width="10" height="6" viewBox="0 0 10 6"><path d="M0.5 0.5 L5 5 L9.5 0.5" fill="none" stroke="#444" stroke-width="1.3"/></svg>
<svg class="a" style="left:1686px;top:407px" width="12" height="13" viewBox="0 0 12 13"><path d="M10.5 7 A4.8 4.8 0 1 1 7.5 2.5" fill="none" stroke="#555" stroke-width="1.3"/><path d="M5.5 0 L9.5 2.5 L6 5.5 Z" fill="#555"/></svg>
<div class="a" style="left:1719px;top:399px;width:210px;height:30px;border:1px solid #d9d9d9"></div>
<svg class="a" style="left:1734px;top:407px" width="13" height="13" viewBox="0 0 13 13"><circle cx="8" cy="5" r="4" fill="none" stroke="#777" stroke-width="1.1"/><path d="M5 8 L0.5 12.5" stroke="#777" stroke-width="1.3"/></svg>
<div class="a ex" style="left:1760px;top:409px;color:#6d6d6d">Beitrag durchsuchen</div>
<!-- epson row -->
<div class="a" style="left:1130px;top:440px;font-size:14.5px;font-weight:bold;color:#1b2b8c;letter-spacing:0.1px">EPSON</div>
<div class="a ex" style="left:1188px;top:442px">Easy Photo Print</div>
<svg class="a" style="left:1282px;top:444px" width="8" height="5" viewBox="0 0 8 5"><path d="M0 0 H8 L4 5 Z" fill="#222"/></svg>
<svg class="a" style="left:1297px;top:439px" width="15" height="15" viewBox="0 0 15 15"><circle cx="7.5" cy="7.5" r="7" fill="#3a9a3a" stroke="#1d6a1d"/><rect x="4" y="5.5" width="7" height="4.5" fill="none" stroke="#fff" stroke-width="1.2"/><rect x="5" y="3" width="5" height="2.5" fill="#fff"/></svg>
<div class="a ex" style="left:1317px;top:442px">Drucken</div>
<div class="a" style="left:1123px;top:456px;width:797px;height:1px;background:#e3e3e3"></div>
<!-- nav pane -->
<div class="a" style="left:1283px;top:458px;width:16px;height:517px;background:#f0f0f0"></div>
<div class="a" style="left:1283px;top:474px;width:16px;height:428px;background:#cdcdcd"></div>
<svg class="a" style="left:1286px;top:462px" width="10" height="6" viewBox="0 0 10 6"><path d="M1 5.5 L5 1.5 L9 5.5" fill="none" stroke="#606060" stroke-width="1.3"/></svg>
<svg class="a" style="left:1286px;top:961px" width="10" height="6" viewBox="0 0 10 6"><path d="M1 0.5 L5 4.5 L9 0.5" fill="none" stroke="#606060" stroke-width="1.3"/></svg>
<div class="a" style="left:1123px;top:617px;width:159px;height:24px;background:#d9d9d9"></div>
<svg width="0" height="0" style="position:absolute"><defs>
<symbol id="fold" viewBox="0 0 16 16"><rect x="2.5" y="1.5" width="11" height="14" fill="#fde68a" stroke="#efd070"/><rect x="11" y="10" width="3" height="5.5" fill="#f2cf5a"/></symbol>
<symbol id="pin" viewBox="0 0 12 12"><path d="M7 0.5 L11.5 5 L9.5 5.5 L7 8 L6.5 10.5 L1.5 5.5 L4 5 L6.5 2.5 Z" fill="#8e8e8e"/><path d="M4 8 L0.5 11.5" stroke="#8e8e8e" stroke-width="1.3"/></symbol>
<symbol id="dl" viewBox="0 0 16 16"><path d="M5.5 1 H10.5 V8 H14.5 L8 15 L1.5 8 H5.5 Z" fill="#2c7ad6"/></symbol>
<symbol id="desk" viewBox="0 0 16 16"><rect x="0.5" y="2.5" width="15" height="11" fill="#1e88e5" stroke="#0d5fb8"/><path d="M1 12.5 H15" stroke="#bfe0ff"/></symbol>
<symbol id="docs" viewBox="0 0 16 16"><path d="M2.5 0.5 H10 L13.5 4 V15.5 H2.5 Z" fill="#fff" stroke="#7a8696"/><path d="M5 5 H7 M5 7.5 H11 M5 10 H11 M5 12.5 H11" stroke="#3a7ad0"/></symbol>
<symbol id="pics" viewBox="0 0 16 16"><rect x="0.5" y="2.5" width="15" height="11" fill="#fff" stroke="#7a8696"/><rect x="2" y="4" width="12" height="8" fill="#9cc4e8"/><path d="M2 12 L6 8 L9 10 L14 7 V12 Z" fill="#3a6a4a"/></symbol>
<symbol id="thumbA" viewBox="0 0 90 51"><rect width="90" height="51" fill="#fff"/><rect width="90" height="4" fill="#1d4a7e"/><rect y="4" width="90" height="3" fill="#6b7c90"/><rect y="7" width="90" height="11" fill="#f2e2d2"/><rect y="49" width="90" height="2" fill="#1b2a40"/></symbol>
</defs></svg>
<div class="a" style="left:1149px;top:476px;width:15px;height:15px;color:#2a7ad8;font-size:15px;line-height:15px">★</div>
<div class="a ex" style="left:1168px;top:480px">Schnellzugriff</div>
<svg class="a" style="left:1155px;top:500px" width="16" height="16"><use href="#dl"/></svg>
<div class="a ex" style="left:1176px;top:504px">Downloads</div>
<svg class="a" style="left:1268px;top:503px" width="12" height="12"><use href="#pin"/></svg>
<svg class="a" style="left:1155px;top:524px" width="16" height="16"><use href="#desk"/></svg>
<div class="a ex" style="left:1176px;top:528px">Desktop</div>
<svg class="a" style="left:1268px;top:527px" width="12" height="12"><use href="#pin"/></svg>
<svg class="a" style="left:1155px;top:548px" width="16" height="16"><use href="#docs"/></svg>
<div class="a ex" style="left:1176px;top:552px">Dokumente</div>
<svg class="a" style="left:1268px;top:551px" width="12" height="12"><use href="#pin"/></svg>
<svg class="a" style="left:1155px;top:572px" width="16" height="16"><use href="#pics"/></svg>
<div class="a ex" style="left:1176px;top:576px">Bilder</div>
<svg class="a" style="left:1268px;top:575px" width="12" height="12"><use href="#pin"/></svg>
<svg class="a" style="left:1155px;top:596px" width="16" height="16"><use href="#fold"/></svg>
<div class="a ex" style="left:1176px;top:600px;width:106px;overflow:hidden;line-height:1.3;margin-top:-2px">ablesung_20_12_2022</div>
<svg class="a" style="left:1155px;top:620px" width="16" height="16"><use href="#fold"/></svg>
<div class="a ex" style="left:1176px;top:624px">Beitrag</div>
<svg class="a" style="left:1155px;top:644px" width="16" height="16"><use href="#fold"/></svg>
<div class="a ex" style="left:1176px;top:648px">Bilder</div>
<svg class="a" style="left:1155px;top:668px" width="16" height="16"><use href="#fold"/></svg>
<div class="a ex" style="left:1176px;top:672px;width:106px;overflow:hidden;line-height:1.3;margin-top:-2px">Grassl_Nebenkosten</div>
<svg class="a" style="left:1147px;top:700px" width="16" height="16" viewBox="0 0 16 16"><path d="M4 1.5 L8 4 L4 6.5 L0 4 Z M12 1.5 L16 4 L12 6.5 L8 4 Z M4 6.5 L8 9 L4 11.5 L0 9 Z M12 6.5 L16 9 L12 11.5 L8 9 Z M8 10 L12 12.5 L8 15 L4 12.5 Z" fill="#1f6fe0"/></svg>
<div class="a ex" style="left:1168px;top:705px">Dropbox</div>
<svg class="a" style="left:1147px;top:733px" width="17" height="12" viewBox="0 0 17 12"><path d="M3.5 11.5 Q0.5 11.5 0.5 8.5 Q0.5 5.8 3.5 5.8 Q4.5 1.5 8.5 1.5 Q12 1.5 13 4.8 Q16.5 5 16.5 8.3 Q16.5 11.5 13 11.5 Z" fill="#1d7fd8"/></svg>
<div class="a ex" style="left:1168px;top:737px">OneDrive - Personal</div>
<svg class="a" style="left:1147px;top:764px" width="16" height="16" viewBox="0 0 16 16"><rect x="0.5" y="1.5" width="15" height="10" fill="#3a9ae8" stroke="#6a7a8a"/><path d="M4 15 H12 M8 12 V15" stroke="#6a7a8a" stroke-width="1.2"/></svg>
<div class="a ex" style="left:1168px;top:768px">Dieser PC</div>
<svg class="a" style="left:1155px;top:788px" width="16" height="16" viewBox="0 0 16 16"><path d="M8 0.5 L15.5 4 V12 L8 15.5 L0.5 12 V4 Z" fill="#4ac8e8"/><path d="M0.5 4 L8 7.5 L15.5 4 L8 0.5 Z" fill="#a8ecf8"/><path d="M8 7.5 V15.5 L15.5 12 V4 Z" fill="#1a9ac8"/></svg>
<div class="a ex" style="left:1176px;top:792px">3D-Objekte</div>
<svg class="a" style="left:1155px;top:812px" width="16" height="16"><use href="#pics"/></svg>
<div class="a ex" style="left:1176px;top:816px">Bilder</div>
<svg class="a" style="left:1155px;top:836px" width="16" height="16"><use href="#desk"/></svg>
<div class="a ex" style="left:1176px;top:840px">Desktop</div>
<svg class="a" style="left:1155px;top:860px" width="16" height="16"><use href="#docs"/></svg>
<div class="a ex" style="left:1176px;top:864px">Dokumente</div>
<svg class="a" style="left:1155px;top:884px" width="16" height="16"><use href="#dl"/></svg>
<div class="a ex" style="left:1176px;top:888px">Downloads</div>
<svg class="a" style="left:1155px;top:908px" width="16" height="16" viewBox="0 0 16 16"><path d="M7 1 V12" stroke="#1d7fd8" stroke-width="1.8"/><ellipse cx="4.8" cy="12.5" rx="3" ry="2.5" fill="#1d7fd8"/><path d="M7 1 Q12 3 11 8 Q10 5 7 4.5" fill="#1d7fd8"/></svg>
<div class="a ex" style="left:1176px;top:912px">Musik</div>
<svg class="a" style="left:1155px;top:932px" width="16" height="16" viewBox="0 0 16 16"><rect x="1" y="0.5" width="14" height="15" fill="#333"/><rect x="4" y="2" width="8" height="12" fill="#4a8ac8"/><path d="M2 2 V14 M14 2 V14" stroke="#ddd" stroke-dasharray="1.5 1.5"/></svg>
<div class="a ex" style="left:1176px;top:936px">Videos</div>
<svg class="a" style="left:1155px;top:956px" width="16" height="16" viewBox="0 0 16 16"><rect x="1" y="9" width="14" height="5" fill="#555"/><rect x="2" y="12" width="12" height="1" fill="#4ad04a"/><path d="M2 2 H5 M2 4.5 H5 M2 7 H5" stroke="#2a8ad8" stroke-width="1.5"/></svg>
<div class="a ex" style="left:1176px;top:960px">Acer (C:)</div>
<!-- status bar -->
<div class="a ex" style="left:1137px;top:980px;color:#333">9 Elemente</div>
<div class="a" style="left:1205px;top:976px;width:1px;height:16px;background:#e6e6e6"></div>
<div class="a ex" style="left:1216px;top:980px;color:#333">9 Elemente ausgewählt (4,83 MB)</div>
<div class="a" style="left:1399px;top:976px;width:1px;height:16px;background:#e6e6e6"></div>
<svg class="a" style="left:1887px;top:975px" width="17" height="15" viewBox="0 0 17 15"><rect x="0.5" y="0.5" width="4" height="14" fill="#fff" stroke="#999"/><path d="M6 2.5 H9 M11 2.5 H16 M6 7.5 H9 M11 7.5 H16 M6 12.5 H9 M11 12.5 H16" stroke="#666" stroke-width="1.2"/></svg>
<div class="a" style="left:1907px;top:973px;width:13px;height:22px;background:#cce8ff;border:1px solid #3a9ae0;border-right:none"></div>
<svg class="a" style="left:1911px;top:978px" width="9" height="12" viewBox="0 0 9 12"><rect x="0.5" y="0.5" width="9" height="11" fill="#fff" stroke="#777"/><rect x="2" y="2" width="7" height="8" fill="#5a8ab8"/></svg>
<div class="a" style="left:1317px;top:463px;width:105px;height:77px;background:#cce8ff;"></div>
<svg class="a" style="left:1323px;top:467px;filter:drop-shadow(1px 1px 1px rgba(0,0,0,.35))" width="90" height="51" viewBox="0 0 90 51"><rect width="90" height="51" fill="#fff"/><rect width="90" height="3.5" fill="#1e4f86"/><rect y="3.5" width="90" height="3" fill="#7a8898"/><rect y="6.5" width="90" height="18" fill="#f6ebe0"/><rect x="20" y="9" width="50" height="2" fill="#c88a6a"/><rect x="30" y="13" width="10" height="2" fill="#f4e040"/><rect y="27" width="90" height="12" fill="#6a5a50"/><rect x="45" y="27" width="45" height="12" fill="#3a8a9a"/><rect x="10" y="27" width="30" height="10" fill="#3a2a22"/><rect x="25" y="42" width="40" height="1" fill="#e08080"/><rect y="49" width="90" height="2" fill="#1b2638"/></svg>
<div class="a ex" style="left:1317px;top:525px;width:105px;text-align:center;color:#111">1.jpg</div>
<div class="a" style="left:1440px;top:463px;width:105px;height:77px;background:#cce8ff;"></div>
<svg class="a" style="left:1446px;top:467px;filter:drop-shadow(1px 1px 1px rgba(0,0,0,.35))" width="90" height="51" viewBox="0 0 90 51"><rect width="90" height="51" fill="#fff"/><rect width="90" height="3.5" fill="#1e4f86"/><rect y="3.5" width="90" height="3" fill="#7a8898"/><rect y="6.5" width="90" height="5" fill="#f2e2d2"/><rect x="15" y="12" width="6" height="1" fill="#ccc"/><path d="M22 15 H32 M22 18 H34 M22 21 H31 M22 24 H33 M22 27 H32 M22 30 H34 M22 33 H31 M22 36 H33 M40 15 H44 M40 18 H44 M40 21 H44 M40 24 H44 M40 27 H44 M40 30 H44 M48 15 H56 M48 18 H56 M48 21 H56 M48 24 H56 M48 27 H56 M48 30 H56 M48 33 H56" stroke="#d8d0c8" stroke-width="1"/><rect x="62" y="11" width="12" height="30" fill="#f6eee6"/><path d="M64 14 H72 M64 17 H72 M64 20 H72 M64 23 H72 M64 26 H72" stroke="#e0b8a8" stroke-width="0.8"/><rect x="7" y="38" width="12" height="4" fill="#f2e840"/><rect y="43" width="90" height="6" fill="#f2e2d2"/><rect y="49" width="90" height="2" fill="#1b2638"/></svg>
<div class="a ex" style="left:1440px;top:525px;width:105px;text-align:center;color:#111">2.jpg</div>
<div class="a" style="left:1563px;top:463px;width:105px;height:77px;background:#cce8ff;"></div>
<svg class="a" style="left:1569px;top:467px;filter:drop-shadow(1px 1px 1px rgba(0,0,0,.35))" width="90" height="51" viewBox="0 0 90 51"><rect width="90" height="51" fill="#fff"/><rect width="90" height="3.5" fill="#1e4f86"/><rect y="3.5" width="90" height="3" fill="#7a8898"/><rect y="6.5" width="90" height="5" fill="#f2e2d2"/><rect x="16" y="13" width="40" height="6" fill="#eee"/><rect x="17" y="15" width="10" height="3" fill="#f2e840"/><rect x="27" y="21" width="14" height="3" fill="#f2e840"/><rect x="17" y="25" width="30" height="8" fill="#dbe6f6"/><rect x="18" y="36" width="8" height="2" fill="#f2e840"/><rect x="30" y="39" width="16" height="2" fill="#f2e840"/><rect x="58" y="11" width="10" height="36" fill="#f6eee6"/><rect y="49" width="90" height="2" fill="#1b2638"/></svg>
<div class="a ex" style="left:1563px;top:525px;width:105px;text-align:center;color:#111">3.jpg</div>
<div class="a" style="left:1686px;top:463px;width:105px;height:77px;background:#cce8ff;"></div>
<svg class="a" style="left:1692px;top:467px;filter:drop-shadow(1px 1px 1px rgba(0,0,0,.35))" width="90" height="51" viewBox="0 0 90 51"><rect width="90" height="51" fill="#fff"/><rect width="90" height="3.5" fill="#1e4f86"/><rect y="3.5" width="90" height="3" fill="#7a8898"/><rect y="6.5" width="90" height="42.5" fill="#5a5a5a"/><rect x="11" y="8" width="68" height="39" fill="#fff"/><rect x="11" y="8" width="68" height="3" fill="#eee"/><rect x="12" y="22" width="68" height="1" fill="#ddd"/><rect x="56" y="13" width="6" height="3" fill="#3a8ad8"/><rect x="45" y="25" width="12" height="2" fill="#f2e840"/><rect x="60" y="24" width="8" height="2" fill="#f2e840"/><rect x="35" y="29" width="12" height="2" fill="#f2e840"/><rect x="35" y="34" width="12" height="2" fill="#f2e840"/><rect x="40" y="22" width="1" height="22" fill="#ccc"/><rect y="49" width="90" height="2" fill="#1b2638"/></svg>
<div class="a ex" style="left:1686px;top:525px;width:105px;text-align:center;color:#111">4.jpg</div>
<div class="a" style="left:1809px;top:463px;width:105px;height:77px;background:#cce8ff;"></div>
<svg class="a" style="left:1815px;top:467px;filter:drop-shadow(1px 1px 1px rgba(0,0,0,.35))" width="90" height="51" viewBox="0 0 90 51"><rect width="90" height="51" fill="#fff"/><rect width="90" height="3.5" fill="#1e4f86"/><rect y="3.5" width="90" height="3" fill="#7a8898"/><rect y="6.5" width="90" height="42.5" fill="#5a5a5a"/><rect x="11" y="8" width="68" height="39" fill="#fff"/><rect x="11" y="8" width="68" height="3" fill="#eee"/><rect x="12" y="22" width="68" height="1" fill="#ddd"/><rect x="7" y="12" width="12" height="2" fill="#f2e840"/><rect x="3" y="17" width="12" height="2" fill="#f2e840"/><rect x="60" y="21" width="14" height="2" fill="#f2e840"/><rect x="31" y="31" width="14" height="2" fill="#f2e840"/><rect x="66" y="32" width="10" height="8" fill="#6a4a30"/><rect x="66" y="13" width="6" height="4" fill="#6a4a30"/><rect x="22" y="31" width="50" height="1" fill="#3a8ad8"/><rect y="49" width="90" height="2" fill="#1b2638"/></svg>
<div class="a ex" style="left:1809px;top:525px;width:105px;text-align:center;color:#111">5.jpg</div>
<div class="a" style="left:1317px;top:541px;width:105px;height:77px;background:#cce8ff;"></div>
<svg class="a" style="left:1323px;top:545px;filter:drop-shadow(1px 1px 1px rgba(0,0,0,.35))" width="90" height="51" viewBox="0 0 90 51"><rect width="90" height="51" fill="#fff"/><rect width="90" height="3.5" fill="#1e4f86"/><rect y="3.5" width="90" height="3" fill="#7a8898"/><rect y="6.5" width="90" height="42.5" fill="#5c5c5c"/><rect x="12" y="9" width="66" height="3" fill="#eee"/><rect x="12" y="24" width="66" height="16" fill="#fff"/><rect x="55" y="35" width="12" height="3" fill="#f2e840"/><rect x="60" y="39" width="18" height="1.5" fill="#3a9a5a"/><rect y="49" width="90" height="2" fill="#1b2638"/></svg>
<div class="a ex" style="left:1317px;top:603px;width:105px;text-align:center;color:#111">6.jpg</div>
<div class="a" style="left:1440px;top:541px;width:105px;height:77px;background:#cce8ff;"></div>
<svg class="a" style="left:1446px;top:545px;filter:drop-shadow(1px 1px 1px rgba(0,0,0,.35))" width="90" height="51" viewBox="0 0 90 51"><rect width="90" height="51" fill="#fff"/><rect width="90" height="3.5" fill="#1e4f86"/><rect y="3.5" width="90" height="3" fill="#7a8898"/><rect y="6.5" width="90" height="42.5" fill="#5c5c5c"/><rect x="12" y="9" width="66" height="3" fill="#eee"/><rect x="12" y="24" width="66" height="16" fill="#fff"/><rect x="36" y="13" width="44" height="27" fill="#fff"/><rect x="36" y="13" width="44" height="2" fill="#ddd"/><rect x="36" y="15" width="7" height="25" fill="#f4f4f4"/><rect x="47" y="20" width="4" height="4" fill="#8a6a50"/><rect x="53" y="20" width="4" height="4" fill="#8a6a50"/><rect x="59" y="20" width="4" height="4" fill="#6a5a50"/><rect x="65" y="20" width="4" height="4" fill="#8a6a50"/><rect x="47" y="27" width="4" height="4" fill="#8a6a50"/><rect x="53" y="27" width="4" height="4" fill="#6a5a50"/><rect x="59" y="27" width="4" height="4" fill="#8a6a50"/><rect x="65" y="27" width="4" height="4" fill="#7a6a5a"/><rect x="70" y="22" width="9" height="3" fill="#f2e840"/><rect x="47" y="35" width="5" height="2" fill="#333"/><rect x="55" y="35" width="5" height="2" fill="#333"/><rect y="49" width="90" height="2" fill="#1b2638"/></svg>
<div class="a ex" style="left:1440px;top:603px;width:105px;text-align:center;color:#111">7.jpg</div>
<div class="a" style="left:1563px;top:541px;width:105px;height:77px;background:#cce8ff;"></div>
<svg class="a" style="left:1569px;top:545px;filter:drop-shadow(1px 1px 1px rgba(0,0,0,.35))" width="90" height="51" viewBox="0 0 90 51"><rect width="90" height="51" fill="#fff"/><rect width="90" height="3.5" fill="#1e4f86"/><rect y="3.5" width="90" height="3" fill="#7a8898"/><rect y="6.5" width="90" height="42.5" fill="#5c5c5c"/><rect x="12" y="9" width="66" height="3" fill="#eee"/><rect x="12" y="24" width="66" height="16" fill="#fff"/><rect x="12" y="26" width="8" height="3" fill="#f2e840"/><rect x="62" y="36" width="12" height="2" fill="#f2e840"/><rect x="52" y="39" width="25" height="1.5" fill="#3a9a5a"/><rect x="64" y="13" width="4" height="3" fill="#3a8ad8"/><rect y="49" width="90" height="2" fill="#1b2638"/></svg>
<div class="a ex" style="left:1563px;top:603px;width:105px;text-align:center;color:#111">8.jpg</div>
<div class="a" style="left:1686px;top:541px;width:105px;height:77px;background:#cce8ff;border:1px solid #99d1ff;"></div>
<svg class="a" style="left:1692px;top:545px;filter:drop-shadow(1px 1px 1px rgba(0,0,0,.35))" width="90" height="51" viewBox="0 0 90 51"><rect width="90" height="51" fill="#fff"/><rect width="90" height="3.5" fill="#1e4f86"/><rect y="3.5" width="90" height="3" fill="#7a8898"/><rect y="6.5" width="90" height="5" fill="#f2e2d2"/><rect x="18" y="12" width="28" height="34" fill="#fafafa"/><rect x="18" y="36" width="22" height="4" fill="#f2e840"/><rect x="55" y="10" width="9" height="18" fill="#f6eee6"/><rect x="86" y="10" width="1" height="20" fill="#999"/><rect y="49" width="90" height="2" fill="#1b2638"/></svg>
<div class="a ex" style="left:1686px;top:603px;width:105px;text-align:center;color:#111">9.jpg</div>
<!-- sticky note -->
<div class="a" style="left:1219px;top:692px;width:418px;height:221px;background:#ffff66;border:2px solid #f2c53a;mix-blend-mode:multiply"></div>
<style>.stk{font-size:17px;font-weight:bold;color:#dd2820;left:1219px;width:418px;text-align:center}</style>
<div class="a stk" style="top:720px">Bilder Ordner öffnen</div>
<div class="a stk" style="top:758px">Bilder markieren</div>
<div class="a stk" style="top:796px">mit der linken Maustaste</div>
<div class="a stk" style="top:834px">nach "Datei hierher ziehen"</div>
<div class="a stk" style="top:872px">START UPLOAD klicken</div>

<!-- ============ TASKBAR ============ -->
<div class="a" style="left:0;top:1040px;width:1920px;height:40px;background:linear-gradient(90deg,#1b202c 0%,#1e2533 45%,#1e2a40 100%)"></div>
<svg class="a" style="left:16px;top:1052px" width="16" height="16" viewBox="0 0 16 16"><path d="M0 0 H7.4 V7.4 H0 Z M8.6 0 H16 V7.4 H8.6 Z M0 8.6 H7.4 V16 H0 Z M8.6 8.6 H16 V16 H8.6 Z" fill="#fff"/></svg>
<svg class="a" style="left:64px;top:1052px" width="17" height="17" viewBox="0 0 17 17"><circle cx="10.5" cy="6.5" r="5.5" fill="none" stroke="#fff" stroke-width="1.3"/><path d="M6.5 10.5 L1 16" stroke="#fff" stroke-width="1.5"/></svg>
<svg class="a" style="left:111px;top:1052px" width="18" height="17" viewBox="0 0 18 17"><rect x="2.5" y="4.5" width="11" height="8" fill="none" stroke="#fff" stroke-width="1.2"/><path d="M0 1 H16 M0 16 H16 M16.5 4 V13" stroke="#fff" stroke-width="1.2"/></svg>
<svg class="a" style="left:160px;top:1049px" width="23" height="23" viewBox="0 0 23 23"><rect width="23" height="23" rx="3" fill="#3aa04a"/><path d="M6 5 H15 L17 7 V18 H6 Z" fill="none" stroke="#d8f0d8" stroke-width="1.3"/><path d="M9 9 V15 M12 9 V15" stroke="#d8f0d8"/></svg>
<svg class="a" style="left:208px;top:1049px" width="23" height="23" viewBox="0 0 23 23"><path d="M7 6 Q7 1 11.5 1 Q16 1 16 6" fill="none" stroke="#2a9ae8" stroke-width="1.5"/><rect x="1" y="5" width="21" height="17" rx="2" fill="#f4f4f4"/><rect x="7" y="9" width="4" height="4" fill="#f25022"/><rect x="12" y="9" width="4" height="4" fill="#7fba00"/><rect x="7" y="14" width="4" height="4" fill="#00a4ef"/><rect x="12" y="14" width="4" height="4" fill="#ffb900"/></svg>
<div class="a" style="left:245px;top:1040px;width:48px;height:40px;background:#3b414e"></div>
<div class="a" style="left:245px;top:1078px;width:48px;height:2px;background:#8ec4f0"></div>
<svg class="a" style="left:258px;top:1050px" width="22" height="20" viewBox="0 0 22 20"><path d="M0 2 H8 L10 4 H22 V19 H0 Z" fill="#f0b83a"/><rect x="0" y="6" width="22" height="13" fill="#fcd35a"/><rect x="6" y="12" width="10" height="6" fill="#1a6ad0"/><rect x="8" y="14" width="6" height="4" fill="#fcd35a"/></svg>
<svg class="a" style="left:306px;top:1048px" width="25" height="25" viewBox="0 0 25 25"><circle cx="12.5" cy="12.5" r="12" fill="#1e8fd8"/><path d="M2 10 Q6 2 14 2.5 Q22 3.5 23 11 Q23 15 18 15.5 L9 15.5 Q10 20 16 20.5 Q20 20.5 22 19 Q19 24 12.5 24.5 Q3 24 2 14 Z" fill="#2ac8a0"/><path d="M9 15.5 Q8 9 14 9 Q18 9 18.5 13" fill="#0a5ab0"/></svg>
<svg class="a" style="left:356px;top:1049px" width="23" height="23" viewBox="0 0 23 23"><rect width="23" height="23" rx="3" fill="#8ac830"/><path d="M3 14 Q3 9 8 9.5 Q9 5 13.5 6 Q18 6 18.5 10.5 Q21 11 21 14 Q20 17 16 16 Q13 17 10 15 Q6 17 3 14" fill="#f0fae0"/></svg>
<svg class="a" style="left:405px;top:1049px" width="23" height="23" viewBox="0 0 23 23"><rect x="1" y="3" width="21" height="19" rx="1.5" fill="#2a8ae0"/><rect x="1" y="3" width="21" height="4" fill="#1a6ac0"/><path d="M6 1 V5 M17 1 V5" stroke="#1a6ac0" stroke-width="1.5"/><g fill="#fff"><rect x="4" y="9" width="3" height="2.5"/><rect x="8.5" y="9" width="3" height="2.5"/><rect x="13" y="9" width="3" height="2.5"/><rect x="17" y="9" width="3" height="2.5"/><rect x="4" y="13" width="3" height="2.5"/><rect x="8.5" y="13" width="3" height="2.5"/><rect x="13" y="13" width="3" height="2.5"/><rect x="17" y="13" width="3" height="2.5"/><rect x="4" y="17" width="3" height="2.5"/><rect x="8.5" y="17" width="3" height="2.5"/></g></svg>
<svg class="a" style="left:453px;top:1050px" width="25" height="20" viewBox="0 0 25 20"><rect x="0" y="1" width="25" height="18" rx="1" fill="#1e90e8"/><path d="M0 2 L12.5 11 L25 2 V1 H0 Z" fill="#7ac8f8"/><path d="M0 19 L10 9 M25 19 L15 9" stroke="#1070c8" stroke-width="1"/></svg>
<svg class="a" style="left:502px;top:1048px" width="27" height="26" viewBox="0 0 27 26"><circle cx="12" cy="12" r="11" fill="#1a5ac8"/><path d="M3 13 Q6 6 14 7 Q20 8 21 14 Q17 19 10 18 Q5 17 3 13" fill="#e8eef8"/><path d="M2 8 Q8 3 16 4" fill="none" stroke="#4ab0f8" stroke-width="2"/><circle cx="19" cy="19" r="6" fill="#e81e2e"/><text x="19" y="22.5" font-size="9" font-weight="bold" fill="#fff" text-anchor="middle" font-family="Liberation Sans">1</text></svg>
<svg class="a" style="left:551px;top:1048px" width="25" height="25" viewBox="0 0 25 25"><circle cx="12.5" cy="13" r="11.5" fill="#ff6a1a"/><path d="M2 9 Q4 1 13 1 Q10 3 11 6 Q16 4 21 8 Q23 11 23 13" fill="#ffba2a"/><circle cx="13" cy="13" r="6" fill="#7a3ad8"/><path d="M1.5 13 Q2 22 11 24 Q4 20 4 13 Z" fill="#ffd23a"/><path d="M7 11 Q10 6 15 8 Q12 8 11 11 Z" fill="#ff8a3a"/></svg>
<div class="a" style="left:495px;top:1078px;width:40px;height:2px;background:#8ec4f0"></div>
<div class="a" style="left:544px;top:1078px;width:39px;height:2px;background:#8ec4f0"></div>
<!-- tray -->
<svg class="a" style="left:1687px;top:1056px" width="12" height="7" viewBox="0 0 12 7"><path d="M0.5 6.5 L6 1 L11.5 6.5" fill="none" stroke="#fff" stroke-width="1.2"/></svg>
<svg class="a" style="left:1711px;top:1052px" width="13" height="16" viewBox="0 0 13 16"><path d="M2 2 Q6.5 0 11 2 M2 14 Q6.5 16 11 14" fill="none" stroke="#ddd" stroke-width="1"/><rect x="1" y="4" width="7" height="8" rx="1.5" fill="none" stroke="#fff" stroke-width="1.1"/><path d="M9 6 L12 4.5 V11.5 L9 10 Z" fill="none" stroke="#fff" stroke-width="1.1"/></svg>
<svg class="a" style="left:1734px;top:1051px" width="15" height="17" viewBox="0 0 15 17"><path d="M7.5 0.5 L14.5 2.5 Q15 11 7.5 16.5 Q0 11 0.5 2.5 Z" fill="#e41e2a" stroke="#fff" stroke-width="0.8"/><text x="7.5" y="12" font-size="10" font-weight="bold" fill="#fff" text-anchor="middle" font-family="Liberation Sans">G</text></svg>
<svg class="a" style="left:1757px;top:1054px" width="17" height="12" viewBox="0 0 17 12"><path d="M2 0 V3 M5 0 V3 M1 3 H6 V6 Q3.5 8 1 6 Z M3.5 7 V11" stroke="#fff" stroke-width="1" fill="none"/><rect x="6.5" y="2.5" width="9" height="8" fill="none" stroke="#fff" stroke-width="1.1"/><rect x="8" y="4" width="4" height="5" fill="#fff"/><rect x="15.5" y="5" width="1.5" height="3" fill="#fff"/></svg>
<svg class="a" style="left:1784px;top:1052px" width="13" height="14" viewBox="0 0 13 14"><path d="M1 13 Q1 1 13 1 M4 13 Q4 4 13 4 M7 13 Q7 7 13 7" fill="none" stroke="#fff" stroke-width="1.1"/><circle cx="11" cy="11.5" r="1.6" fill="#fff"/></svg>
<div class="a" style="left:1820px;top:1046px;font-size:11px;color:#fff;letter-spacing:-0.2px">17:51</div>
<div class="a" style="left:1808px;top:1064px;font-size:11px;color:#fff;letter-spacing:-0.25px">16.02.2023</div>
<svg class="a" style="left:1879px;top:1050px" width="25" height="22" viewBox="0 0 25 22"><path d="M0.5 0.5 H17.5 V12.5 H6 L2.5 16 V12.5 H0.5 Z" fill="#fff"/><path d="M3 3.5 H15 M3 6.5 H15 M3 9.5 H12" stroke="#1c2a3f" stroke-width="1"/><circle cx="17" cy="14.5" r="7" fill="#1c2a3f" stroke="#aaa" stroke-width="1"/><text x="17" y="18.5" font-size="11" fill="#fff" text-anchor="middle" font-family="Liberation Sans">2</text></svg>
<div class="a" style="left:1915px;top:1040px;width:1px;height:40px;background:#5a6678"></div>
</body></html>
